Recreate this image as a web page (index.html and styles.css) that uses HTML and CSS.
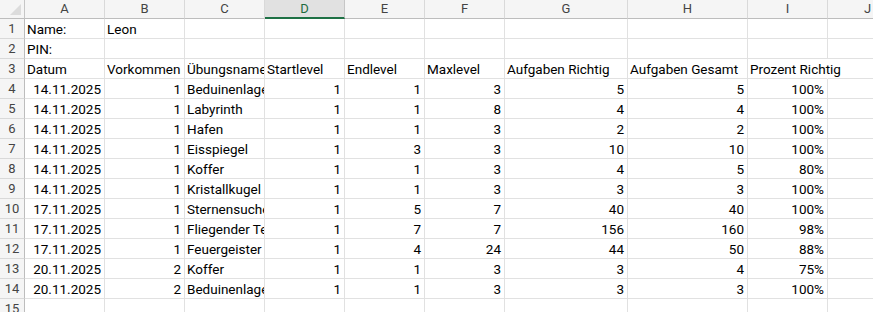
FILE: index.html
```html
<!DOCTYPE html>
<html lang="de">
<head>
<meta charset="utf-8">
<title>Tabelle</title>
<link rel="stylesheet" href="styles.css">
</head>
<body>
<div class="sheet">
  <div class="ch corner"><span class="tri"></span></div>
  <div class="ch">A</div><div class="ch">B</div><div class="ch">C</div><div class="ch sel">D</div><div class="ch">E</div><div class="ch">F</div><div class="ch">G</div><div class="ch">H</div><div class="ch">I</div><div class="ch">J</div>

  <div class="rh">1</div><div class="c">Name:</div><div class="c">Leon</div><div class="c"></div><div class="c"></div><div class="c"></div><div class="c"></div><div class="c"></div><div class="c"></div><div class="c"></div><div class="c"></div>
  <div class="rh">2</div><div class="c">PIN:</div><div class="c"></div><div class="c"></div><div class="c"></div><div class="c"></div><div class="c"></div><div class="c"></div><div class="c"></div><div class="c"></div><div class="c"></div>
  <div class="rh">3</div><div class="c">Datum</div><div class="c">Vorkommen</div><div class="c">Übungsname</div><div class="c">Startlevel</div><div class="c">Endlevel</div><div class="c">Maxlevel</div><div class="c">Aufgaben Richtig</div><div class="c">Aufgaben Gesamt</div><div class="c spill">Prozent Richtig</div><div class="c"></div>

  <div class="rh">4</div><div class="c r">14.11.2025</div><div class="c r">1</div><div class="c">Beduinenlager</div><div class="c r">1</div><div class="c r">1</div><div class="c r">3</div><div class="c r">5</div><div class="c r">5</div><div class="c r">100%</div><div class="c"></div>
  <div class="rh">5</div><div class="c r">14.11.2025</div><div class="c r">1</div><div class="c">Labyrinth</div><div class="c r">1</div><div class="c r">1</div><div class="c r">8</div><div class="c r">4</div><div class="c r">4</div><div class="c r">100%</div><div class="c"></div>
  <div class="rh">6</div><div class="c r">14.11.2025</div><div class="c r">1</div><div class="c">Hafen</div><div class="c r">1</div><div class="c r">1</div><div class="c r">3</div><div class="c r">2</div><div class="c r">2</div><div class="c r">100%</div><div class="c"></div>
  <div class="rh">7</div><div class="c r">14.11.2025</div><div class="c r">1</div><div class="c">Eisspiegel</div><div class="c r">1</div><div class="c r">3</div><div class="c r">3</div><div class="c r">10</div><div class="c r">10</div><div class="c r">100%</div><div class="c"></div>
  <div class="rh">8</div><div class="c r">14.11.2025</div><div class="c r">1</div><div class="c">Koffer</div><div class="c r">1</div><div class="c r">1</div><div class="c r">3</div><div class="c r">4</div><div class="c r">5</div><div class="c r">80%</div><div class="c"></div>
  <div class="rh">9</div><div class="c r">14.11.2025</div><div class="c r">1</div><div class="c">Kristallkugel</div><div class="c r">1</div><div class="c r">1</div><div class="c r">3</div><div class="c r">3</div><div class="c r">3</div><div class="c r">100%</div><div class="c"></div>
  <div class="rh">10</div><div class="c r">17.11.2025</div><div class="c r">1</div><div class="c">Sternensucher</div><div class="c r">1</div><div class="c r">5</div><div class="c r">7</div><div class="c r">40</div><div class="c r">40</div><div class="c r">100%</div><div class="c"></div>
  <div class="rh">11</div><div class="c r">17.11.2025</div><div class="c r">1</div><div class="c">Fliegender Teppich</div><div class="c r">1</div><div class="c r">7</div><div class="c r">7</div><div class="c r">156</div><div class="c r">160</div><div class="c r">98%</div><div class="c"></div>
  <div class="rh">12</div><div class="c r">17.11.2025</div><div class="c r">1</div><div class="c">Feuergeister</div><div class="c r">1</div><div class="c r">4</div><div class="c r">24</div><div class="c r">44</div><div class="c r">50</div><div class="c r">88%</div><div class="c"></div>
  <div class="rh">13</div><div class="c r">20.11.2025</div><div class="c r">2</div><div class="c">Koffer</div><div class="c r">1</div><div class="c r">1</div><div class="c r">3</div><div class="c r">3</div><div class="c r">4</div><div class="c r">75%</div><div class="c"></div>
  <div class="rh">14</div><div class="c r">20.11.2025</div><div class="c r">2</div><div class="c">Beduinenlager</div><div class="c r">1</div><div class="c r">1</div><div class="c r">3</div><div class="c r">3</div><div class="c r">3</div><div class="c r">100%</div><div class="c"></div>
  <div class="rh">15</div><div class="c"></div><div class="c"></div><div class="c"></div><div class="c"></div><div class="c"></div><div class="c"></div><div class="c"></div><div class="c"></div><div class="c"></div><div class="c"></div>
</div>
</body>
</html>
```

FILE: styles.css
```css
html, body {
  margin: 0;
  padding: 0;
  background: #ffffff;
  overflow: hidden;
}

.sheet {
  display: grid;
  grid-template-columns: 25px 80px 80px 80px 80px 80px 80px 123px 120px 80px 80px;
  grid-template-rows: 19px repeat(15, 20px);
  font-family: Roboto, "Liberation Sans", sans-serif;
  font-size: 13.5px;
  color: #000;
}

.ch {
  box-sizing: border-box;
  background: #f5f5f5;
  border-right: 1px solid #d9d9d9;
  border-bottom: 1px solid #bdbdbd;
  color: #444;
  text-align: center;
  line-height: 18px;
  font-size: 13px;
}

.ch.sel {
  background: #e1e1e1;
  color: #1e6b3f;
  border-bottom: 2px solid #1e7145;
  border-right-color: #c6c6c6;
}

.corner {
  position: relative;
  border-right: 1px solid #c6c6c6;
}

.tri {
  position: absolute;
  right: 3px;
  bottom: 3px;
  width: 0;
  height: 0;
  border-left: 11px solid transparent;
  border-bottom: 11px solid #dcdcdc;
}

.rh {
  box-sizing: border-box;
  background: #f5f5f5;
  border-right: 1px solid #bdbdbd;
  border-bottom: 1px solid #d9d9d9;
  color: #444;
  text-align: center;
  line-height: 20px;
  font-size: 13px;
}

.c {
  box-sizing: border-box;
  border-right: 1px solid #e1e1e1;
  border-bottom: 1px solid #e1e1e1;
  padding: 0 2px;
  line-height: 20px;
  white-space: nowrap;
  overflow: hidden;
}

.c.r {
  text-align: right;
  padding-right: 3px;
}

.c.spill {
  overflow: visible;
  border-right-color: transparent;
}
```
